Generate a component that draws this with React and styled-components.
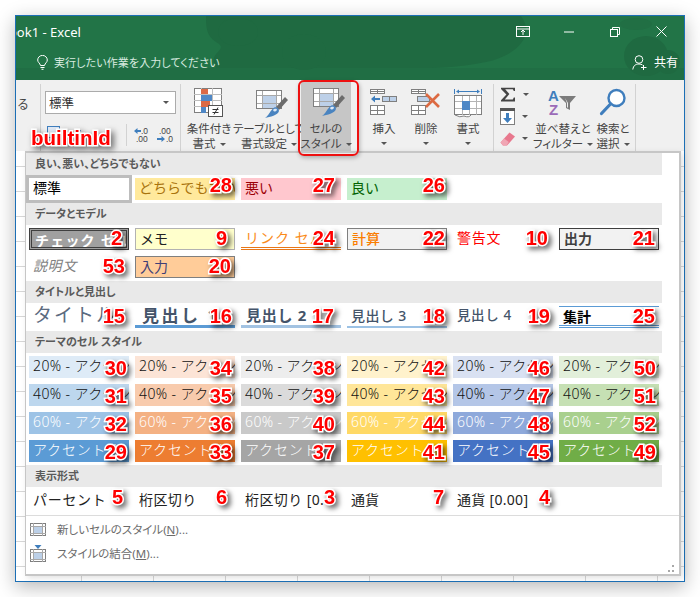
import React from "react";
import styled, { createGlobalStyle, css } from "styled-components";

const UI = `"Noto Sans", "Noto Sans CJK JP", sans-serif`;

const Global = createGlobalStyle`
  html, body { margin: 0; padding: 0; background: #fff; }
  body { font-family: ${UI}; width: 700px; height: 597px; overflow: hidden; }
  * { box-sizing: border-box; }
`;

const Page = styled.div`
  padding: 15px;
  width: 700px;
  height: 597px;
`;
const Window = styled.div`
  position: relative;
  width: 670px;
  height: 567px;
  border: 1px solid #1c6fb5;
  background: #fff;
  box-shadow: 0 5px 18px rgba(0, 0, 0, 0.28);
  display: flex;
  flex-direction: column;
`;
const TitleBar = styled.header`
  position: relative;
  height: 64px;
  flex: none;
  background: #227447;
  color: #fff;
  overflow: hidden;
`;
const TitleArt = styled.svg`
  position: absolute;
  inset: 0;
`;
const TitleRow = styled.div`
  position: relative;
  height: 31px;
  display: flex;
  align-items: center;
`;
const DocTitle = styled.div`
  margin-left: -7px;
  font-size: 13px;
  line-height: 31px;
  padding-top: 1px;
  white-space: nowrap;
`;
const WinButtons = styled.div`
  margin-left: auto;
  display: flex;
  align-items: center;
`;
const WinButton = styled.span`
  width: 46px;
  height: 31px;
  display: flex;
  align-items: center;
  justify-content: center;
`;
const SearchRow = styled.div`
  position: relative;
  height: 33px;
  display: flex;
  align-items: center;
  padding-left: 21px;
  padding-bottom: 3px;
`;
const SearchText = styled.span`
  margin-left: 6px;
  font-size: 11px;
  font-feature-settings: "palt";
  letter-spacing: 0.1px;
  color: #d9ebe0;
  white-space: nowrap;
`;
const Share = styled.div`
  margin-left: auto;
  margin-right: 6px;
  display: flex;
  align-items: center;
  gap: 7px;
  font-size: 12px;
`;

const Ribbon = styled.section`
  height: 71px;
  flex: none;
  background: #f0f0f0;
  display: flex;
  align-items: stretch;
  color: #444;
  overflow: hidden;
`;
const Divider = styled.i`
  display: block;
  width: 1px;
  flex: none;
  margin: 4px 0 0;
  background: #d2d2d2;
`;
const ToolDivider = styled(Divider)`
  height: 22px;
  margin: 0 7px 0 15px;
`;
const Group = styled.div`
  flex: none;
  width: ${(p) => p.$w}px;
  display: flex;
  ${(p) => p.$ml && css`margin-left: ${p.$ml}px;`}
`;
const Fragment = styled.div`
  width: 24px;
  flex: none;
  position: relative;
  overflow: hidden;
  font-size: 12px;
`;
const FragmentText = styled.span`
  display: block;
  margin-top: 15px;
  margin-left: 1px;
  color: #444;
`;
const NumberGroup = styled.div`
  flex: none;
  width: 139px;
  padding: 11px 0 0 4px;
`;
const Combo = styled.div`
  width: 131px;
  height: 23px;
  background: #fff;
  border: 1px solid #ababab;
  display: flex;
  align-items: center;
  padding: 0 6px 0 3px;
  font-size: 12.5px;
  justify-content: space-between;
  color: #333;
`;
const NumberTools = styled.div`
  margin-top: 10px;
  display: flex;
  align-items: center;
`;
const Caret = styled.span`
  display: inline-block;
  width: 0;
  height: 0;
  border-left: 3px solid transparent;
  border-right: 3px solid transparent;
  border-top: 3px solid #555;
  flex: none;
  vertical-align: middle;
  ${(p) => p.$gap && css`margin-left: ${p.$gap}px;`}
`;
const RibbonButton = styled.div`
  flex: none;
  width: ${(p) => p.$w}px;
  height: 71px;
  display: flex;
  flex-direction: column;
  align-items: center;
  background: ${(p) => (p.$active ? "#c6c6c6" : "transparent")};
  white-space: nowrap;
`;
const IconSlot = styled.div`
  height: 41px;
  padding-top: ${(p) => p.$top ?? 7}px;
  display: flex;
  justify-content: center;
  align-items: flex-start;
`;
const ButtonLabel = styled.div`
  font-size: 11.5px;
  line-height: 15px;
  font-feature-settings: "palt";
  text-align: center;
  color: #444;
  white-space: nowrap;
`;
const CaretLine = styled.div`
  height: 15px;
  display: flex;
  align-items: center;
  justify-content: center;
`;
const EditColumn = styled.div`
  flex: none;
  width: 36px;
  margin-left: 6px;
  padding-top: 6px;
  display: flex;
  flex-direction: column;
  gap: 5px;
`;
const EditRow = styled.div`
  display: flex;
  align-items: center;
  height: 17px;
  gap: 7px;
`;

const Sheet = styled.div`
  flex: 1;
  background-color: #fff;
  background-image:
    repeating-linear-gradient(to right, transparent 0 65px, #d6d6d6 65px 66px, transparent 66px 72px),
    repeating-linear-gradient(to bottom, transparent 0 15px, #d6d6d6 15px 16px, transparent 16px 25px);
`;

const Panel = styled.div`
  position: absolute;
  left: 9px;
  top: 135px;
  width: 656px;
  height: 425px;
  background: #fff;
  border: 1px solid #c6c6c6;
  border-top-width: 2px;
  border-right-width: 2px;
  border-bottom-width: 2px;
  box-shadow: 2px 2px 6px rgba(0, 0, 0, 0.12);
  display: flex;
  flex-direction: column;
`;
const Gallery = styled.div`
  width: 636px;
`;
const SectionHead = styled.div`
  height: 22px;
  background: #e9e9e9;
  padding-left: 9px;
  font-size: 11px;
  font-weight: 700;
  line-height: 21px;
  color: #5a5a5a;
  font-feature-settings: "palt";
  white-space: nowrap;
`;
const StyleGrid = styled.div`
  display: grid;
  grid-template-columns: repeat(6, 100px);
  grid-auto-rows: 22px;
  gap: 6px;
  padding: 3px;
`;
const Slot = styled.div`
  position: relative;
  ${(p) => p.$selected && css`outline: 3px solid #bdbdbd;`}
`;

const variants = {
  normal: css`color: #000; background: #fff;`,
  neutral: css`color: #a9730c; background: #ffe99c;`,
  bad: css`color: #9c0006; background: #ffc7ce;`,
  good: css`color: #006100; background: #c6efce;`,
  check: css`
    color: #fff;
    font-weight: 700;
    background: #a0a0a0;
    border: 3px double #3f3f3f;
    padding-left: 3px;
  `,
  note: css`color: #222; background: #ffffcc; border: 1px solid #b2b2b2;`,
  link: css`color: #fa8b1a; background: #fff; border-bottom: 3px double #e87717;`,
  calc: css`color: #fa7d00; font-weight: 500; background: #f2f2f2; border: 1px solid #7f7f7f;`,
  warn: css`color: #ff0000; background: #fff;`,
  output: css`color: #3f3f3f; font-weight: 700; background: #f2f2f2; border: 1px solid #3f3f3f;`,
  explain: css`color: #7f7f7f; font-style: italic; background: #fff;`,
  input: css`color: #3f3f76; background: #ffcc99; border: 1px solid #7f7f7f;`,
  title: css`color: #5c6b80; font-size: 19px; background: #fff;`,
  h1: css`color: #44546a; font-size: 17px; font-weight: 700; background: #fff; border-bottom: 3px solid #5b9bd5; padding-left: 7px;`,
  h2: css`color: #44546a; font-size: 15px; font-weight: 700; background: #fff; border-bottom: 3px solid #a3c3e2; padding-left: 5px;`,
  h3: css`color: #44546a; font-size: 14px; font-weight: 500; background: #fff; border-bottom: 2px solid #9cc2e5;`,
  h4: css`color: #44546a; font-size: 13.5px; font-weight: 500; background: #fff;`,
  total: css`
    color: #000;
    font-weight: 700;
    background: #fff;
    border-top: 1px solid #5b9bd5;
    border-bottom: 3px double #5b9bd5;
  `,
  plain: css`color: #222; background: #fff;`,
};

const Swatch = styled.div`
  width: 100%;
  height: 100%;
  overflow: hidden;
  white-space: nowrap;
  font-size: 14px;
  line-height: 17px;
  padding: 1px 0 0 4px;
  display: flex;
  align-items: flex-start;
  ${(p) => variants[p.$v]}
  ${(p) => p.$bg && css`background: ${p.$bg}; color: ${p.$fg}; font-weight: 300;`}
  ${(p) => p.$wide && css`letter-spacing: ${p.$wide}px;`}
`;
const Badge = styled.span`
  position: absolute;
  right: ${(p) => p.$r + 1}px;
  top: 50%;
  transform: translateY(calc(-50% + ${(p) => p.$dy}px));
  font-family: "Liberation Sans", Arial, sans-serif;
  font-size: 20px;
  line-height: 20px;
  font-weight: 700;
  color: #f00;
  -webkit-text-stroke: 3px #fff;
  paint-order: stroke fill;
  filter: drop-shadow(3px 3px 2.5px rgba(0, 0, 0, 0.55));
  z-index: 2;
`;

const PanelRule = styled.div`
  height: 1px;
  background: #dcdcdc;
  margin-top: 0;
`;
const MenuList = styled.div`
  padding-top: 1px;
`;
const MenuItem = styled.div`
  height: 24px;
  display: flex;
  align-items: center;
  padding-left: 4px;
  font-size: 11.5px;
  color: #6b6b6b;
  font-feature-settings: "palt";
  white-space: nowrap;
`;
const MenuIconSlot = styled.span`
  width: 27px;
  display: flex;
  flex: none;
`;
const Grip = styled.svg`
  position: absolute;
  right: 4px;
  bottom: 1px;
`;
const RedFrame = styled.div`
  position: absolute;
  left: 282px;
  top: 64px;
  width: 61px;
  height: 76px;
  border: 2.5px solid #ee1111;
  border-radius: 6px;
  box-shadow: 1px 2px 4px rgba(0, 0, 0, 0.25);
  z-index: 3;
`;
const BuiltinLabel = styled.span`
  position: absolute;
  left: 15px;
  top: 110px;
  font-family: "Liberation Sans", Arial, sans-serif;
  font-size: 20.5px;
  line-height: 24px;
  font-weight: 700;
  color: #f00;
  -webkit-text-stroke: 3px #fff;
  paint-order: stroke fill;
  filter: drop-shadow(3px 3px 3px rgba(0, 0, 0, 0.55));
  z-index: 3;
`;
const BrushSvg = styled.svg`
  margin-left: 8px;
`;

/* ---------- drawings ---------- */
const GRAY = "#7f7f7f";

const CondIcon = () => (
  <svg width="32" height="32" viewBox="0 0 32 32" shapeRendering="crispEdges">
    <rect x="1.5" y="1.5" width="27" height="24" fill="#fff" stroke={GRAY} />
    <path d="M8.5 1v25M19.5 1v25M1 7.5h28M1 13.5h28M1 19.5h28" stroke="#bdbdbd" fill="none" />
    <rect x="8" y="2" width="7" height="5" fill="#db6a46" />
    <rect x="8" y="8" width="11" height="6" fill="#4f88c6" />
    <rect x="8" y="14" width="9" height="6" fill="#db6a46" />
    <rect x="8" y="20" width="5" height="6" fill="#4f88c6" />
    <rect x="15.5" y="18.5" width="14" height="11" fill="#fff" stroke="#555" />
    <path d="M19.5 22.5h6M19.5 25.5h6M25 20.5l-4 7" stroke="#333" fill="none" shapeRendering="auto" />
  </svg>
);
const BrushIcon = () => (
  <BrushSvg width="36" height="32" viewBox="0 0 36 32">
    <rect x="1.5" y="1.5" width="25" height="18" fill="#fff" stroke={GRAY} shapeRendering="crispEdges" />
    <rect x="7" y="6" width="15" height="13" fill="#bdd0e8" shapeRendering="crispEdges" />
    <path d="M7.5 2v17M21.5 2v17M2 6.5h24M2 14.5h24" stroke="#a8a8a8" fill="none" shapeRendering="crispEdges" />
    <path d="M30 8 L33 11 L24 21 L21 18 Z" fill="#6c6c6c" />
    <path d="M17.5 20 C20 16.5 24 18.5 24 22 C23 26 15 28 10 29 C14 26 14.5 23 17.5 20Z" fill="#4a84c0" />
    <path d="M18 21 C20 19 22 20 22 21 C20 23 19 23 18 21Z" fill="#dde9f6" />
  </BrushSvg>
);
const CellGrid = ({ x, y, w = 15, h = 9 }) => (
  <g shapeRendering="crispEdges" fill="none" stroke={GRAY}>
    <rect x={x + 0.5} y={y + 0.5} width={w} height={h} fill="#fff" />
    <path d={`M${x + Math.round(w / 2) + 0.5} ${y}v${h}M${x} ${y + Math.round(h / 2) + 0.5}h${w}`} />
  </g>
);
const InsertIcon = () => (
  <svg width="30" height="28" viewBox="0 0 30 28">
    <CellGrid x={1} y={1} w={14} h={4} />
    <rect x="13.5" y="8.5" width="14" height="5" fill="#bcd0e8" stroke={GRAY} shapeRendering="crispEdges" />
    <path d="M20.5 9v5" stroke={GRAY} shapeRendering="crispEdges" />
    <path d="M2 11 L6 7.5 V10 H11 V12 H6 V14.5Z" fill="#3f7ebd" />
    <CellGrid x={1} y={17} w={14} h={9} />
  </svg>
);
const DeleteIcon = () => (
  <svg width="32" height="28" viewBox="0 0 32 28">
    <CellGrid x={1} y={1} w={14} h={4} />
    <rect x="7" y="8.5" width="12" height="5" fill="#bcd0e8" stroke={GRAY} shapeRendering="crispEdges" />
    <CellGrid x={1} y={17} w={14} h={9} />
    <path d="M16 6 L29 19 M29 6 L16 19" stroke="#dc6a42" strokeWidth="2.6" fill="none" />
  </svg>
);
const FormatIcon = () => (
  <svg width="30" height="30" viewBox="0 0 30 30">
    <path d="M1.5 1v5M28.5 1v5M4 3.5h22" stroke="#3f7ebd" fill="none" shapeRendering="crispEdges" />
    <path d="M3 3.5l3-2v4zM27 3.5l-3-2v4z" fill="#3f7ebd" />
    <rect x="1.5" y="7.5" width="27" height="19" fill="#fff" stroke={GRAY} shapeRendering="crispEdges" />
    <path d="M9 8v19M16 8v19M23 8v19M2 13h26M2 20h26" stroke="#b4b4b4" fill="none" shapeRendering="crispEdges" />
    <rect x="9" y="13" width="8" height="9" fill="#4f88c6" />
    <path d="M2 27 q5 3 9 1 q5 2 7-1" stroke={GRAY} fill="#fff" />
  </svg>
);
const SigmaIcon = () => (
  <svg width="16" height="15" viewBox="0 0 16 15">
    <path d="M1 0.8h14v3.2h-1.2l-1-1.8H5.2L9.4 7 4.8 12.4h8l1-1.9H15v4H1v-1.2L6.4 7.6 1 1.9z" fill="#444" />
  </svg>
);
const FillIcon = () => (
  <svg width="15" height="17" viewBox="0 0 15 17">
    <rect x="0.5" y="0.5" width="14" height="16" fill="#fff" stroke={GRAY} shapeRendering="crispEdges" />
    <rect x="0" y="0" width="15" height="3" fill="#555" />
    <path d="M6 5h3v5h3l-4.5 5L3 10h3z" fill="#3f7ebd" />
  </svg>
);
const EraserIcon = () => (
  <svg width="15" height="14" viewBox="0 0 15 14">
    <path d="M9.5 0.5 L15 4.5 L7 13.5 H3 L0.5 10.5Z" fill="#e8788e" />
    <path d="M0.5 10.5 L4 6.5 L8.8 10 L6.5 13.5 H3Z" fill="#f0a6b4" />
  </svg>
);
const SortIcon = () => (
  <svg width="30" height="28" viewBox="0 0 30 28">
    <text x="0" y="12" fontFamily="Liberation Sans" fontWeight="700" fontSize="15" fill="#3f7ebd">A</text>
    <text x="1" y="26" fontFamily="Liberation Sans" fontWeight="700" fontSize="15" fill="#9b6bb8">Z</text>
    <path d="M11 7 H28 L22 14 V21 L18 19 V14Z" fill="#7c7c7c" />
    <path d="M17 9 L20 14 V19 L19 18 V14Z" fill="#eee" />
  </svg>
);
const FindIcon = () => (
  <svg width="28" height="28" viewBox="0 0 28 28">
    <circle cx="17.5" cy="10" r="8" fill="#fff" stroke="#3f7ebd" strokeWidth="2.4" />
    <path d="M11.5 16 L2.5 25.5" stroke="#3f7ebd" strokeWidth="3.2" strokeLinecap="round" />
  </svg>
);
const NewStyleIcon = () => (
  <svg width="16" height="13" viewBox="0 0 16 13" shapeRendering="crispEdges">
    <rect x="0.5" y="0.5" width="15" height="12" fill="#fff" stroke={GRAY} />
    <rect x="4" y="3" width="8" height="7" fill="#bcd0e8" />
    <path d="M3.5 0v13M12.5 0v13M0 3h16M0 10h16" stroke="#a8a8a8" fill="none" />
  </svg>
);
const MergeIcon = () => (
  <svg width="16" height="17" viewBox="0 0 16 17">
    <path d="M4.5 0h7L8 4z" fill="#3f7ebd" />
    <g shapeRendering="crispEdges">
      <rect x="0.5" y="4.5" width="15" height="12" fill="#fff" stroke={GRAY} />
      <rect x="4" y="7" width="8" height="7" fill="#bcd0e8" />
      <path d="M3.5 4v13M12.5 4v13M0 7h16M0 14h16" stroke="#a8a8a8" fill="none" />
    </g>
  </svg>
);
const Title = () => (
  <TitleArt width="668" height="64" viewBox="0 0 668 64">
    <g fill="#1f6a41">
      <path d="M190 0 H505 C520 20 500 40 470 46 C440 52 420 52 400 52 H200 C190 36 215 34 200 26 C190 20 190 10 190 0Z" />
      <ellipse cx="222" cy="16" rx="20" ry="14" />
      <ellipse cx="620" cy="8" rx="16" ry="6" opacity="0.5" />
      <ellipse cx="288" cy="36" rx="22" ry="18" />
      <ellipse cx="630" cy="40" rx="22" ry="20" />
      <ellipse cx="652" cy="46" rx="12" ry="12" />
      <rect x="0" y="52" width="668" height="12" opacity="0.55" />
    </g>
  </TitleArt>
);
const Stroke = { fill: "none", stroke: "#fff", strokeWidth: 1 };
const ChromeDisplay = () => (
  <svg width="14" height="11" viewBox="0 0 14 11" {...Stroke}>
    <rect x="0.5" y="0.5" width="13" height="10" />
    <path d="M0 3h14M7 9V4M5 6l2-2 2 2" />
  </svg>
);
const ChromeMin = () => (
  <svg width="10" height="2" viewBox="0 0 10 2" {...Stroke}><path d="M0 1h10" /></svg>
);
const ChromeRestore = () => (
  <svg width="10" height="10" viewBox="0 0 10 10" {...Stroke}>
    <path d="M2.5 2.5V.5h7v7h-2" />
    <rect x="0.5" y="2.5" width="7" height="7" />
  </svg>
);
const ChromeClose = () => (
  <svg width="11" height="11" viewBox="0 0 11 11" {...Stroke}><path d="M.5.5l10 10M10.5.5l-10 10" /></svg>
);
const Bulb = () => (
  <svg width="11" height="15" viewBox="0 0 11 15" fill="none" stroke="#fff">
    <path d="M3.5 10.5 C3 8 .7 7.5 .7 5 A4.8 4.6 0 0 1 10.3 5 C10.3 7.5 8 8 7.5 10.5Z" />
    <path d="M3.5 12.5h4M4.5 14.3h2" />
  </svg>
);
const ShareGlyph = () => (
  <svg width="15" height="15" viewBox="0 0 15 15" fill="none" stroke="#fff">
    <circle cx="7" cy="4.5" r="3.8" />
    <path d="M.8 14.5 C1.5 10.5 3.5 9 7 9 C8.5 9 9.5 9.3 10.5 10M11.5 10v5M9 12.5h5.5" />
  </svg>
);
const DecimalTools = () => (
  <svg width="40" height="18" viewBox="0 0 40 18">
    <g fontFamily="Liberation Sans" fontSize="8.5" fill="#444">
      <text x="7" y="8">.0</text>
      <text x="2" y="16">.00</text>
      <text x="25" y="8">.00</text>
      <text x="32" y="16">.0</text>
    </g>
    <path d="M0 5 L3.5 2 V4 H7 V6 H3.5 V8Z" fill="#3f7ebd" />
    <path d="M31 13 L27.5 10 V12 H23 V14 H27.5 V16Z" fill="#3f7ebd" />
  </svg>
);
const CurrencyStub = () => (
  <svg width="66" height="18" viewBox="0 0 66 18">
    <rect x="2.5" y="0.5" width="12" height="11" fill="#dfe8f4" stroke="#3f7ebd" />
    <text x="28" y="12" fontFamily="Liberation Sans" fontSize="11" fill="#444">%</text>
    <text x="56" y="12" fontFamily="Liberation Sans" fontSize="11" fontWeight="700" fill="#444">,</text>
  </svg>
);

/* ---------- data ---------- */
const accent = [
  ["#deebf7", "#bdd7ee", "#9dc3e6", "#5b9bd5"],
  ["#fce4d6", "#f8cbad", "#f4b183", "#ed7d31"],
  ["#ededed", "#dbdbdb", "#c9c9c9", "#a5a5a5"],
  ["#fff2cc", "#ffe699", "#ffd966", "#ffc000"],
  ["#d9e1f2", "#b4c6e7", "#8ea9db", "#4472c4"],
  ["#e2efda", "#c6e0b4", "#a9d08e", "#70ad47"],
];
const themeRights = [1, 2, 5, 1, 2, 2];
const themeRows = [
  { label: "20% - アクセント", nums: [30, 34, 38, 42, 46, 50], fg: "#111", i: 0, wide: 0.4 },
  { label: "40% - アクセント", nums: [31, 35, 39, 43, 47, 51], fg: "#111", i: 1, wide: 0.4 },
  { label: "60% - アクセント", nums: [32, 36, 40, 44, 48, 52], fg: "#fff", i: 2, wide: 0.4 },
  { label: "アクセント 1", nums: [29, 33, 37, 41, 45, 49], fg: "#fff", i: 3, wide: 0.8 },
];
const themeCells = themeRows.flatMap((row) =>
  row.nums.map((n, c) => ({
    text: row.label,
    n,
    r: themeRights[c],
    bg: accent[c][row.i],
    fg: row.fg,
    wide: row.wide,
  }))
);

const sections = [
  {
    head: "良い、悪い、どちらでもない",
    dy: -4,
    cells: [
      { text: "標準", v: "normal", selected: true },
      { text: "どちらでもない", v: "neutral", n: 28, r: 2 },
      { text: "悪い", v: "bad", n: 27, r: 5 },
      { text: "良い", v: "good", n: 26, r: 1 },
    ],
  },
  {
    head: "データとモデル",
    dy: -1,
    cells: [
      { text: "チェック セル", v: "check", n: 2, r: 6, wide: 1.2 },
      { text: "メモ", v: "note", n: 9, r: 7 },
      { text: "リンク セル", v: "link", n: 24, r: 5, wide: 1 },
      { text: "計算", v: "calc", n: 22, r: 1 },
      { text: "警告文", v: "warn", n: 10, r: 4, wide: 0.7 },
      { text: "出力", v: "output", n: 21, r: 3 },
      { text: "説明文", v: "explain", n: 53, r: 3, wide: 0.6 },
      { text: "入力", v: "input", n: 20, r: 3 },
    ],
  },
  {
    head: "タイトルと見出し",
    dy: -1,
    cells: [
      { text: "タイトル", v: "title", n: 15, r: 3, wide: 2 },
      { text: "見出し 1", v: "h1", n: 16, r: 2, wide: 2.5 },
      { text: "見出し 2", v: "h2", n: 17, r: 6, wide: 0.7 },
      { text: "見出し 3", v: "h3", n: 18, r: 1, wide: 0.4 },
      { text: "見出し 4", v: "h4", n: 19, r: 2, wide: 0.6 },
      { text: "集計", v: "total", n: 25, r: 3 },
    ],
  },
  { head: "テーマのセル スタイル", dy: 1, cells: themeCells },
  {
    head: "表示形式",
    dy: -4,
    cells: [
      { text: "パーセント", v: "plain", n: 5, r: 5, wide: 0.7 },
      { text: "桁区切り", v: "plain", n: 6, r: 7, wide: 0.4 },
      { text: "桁区切り [0.", v: "plain", n: 3, r: 5, wide: 0.4 },
      { text: "通貨", v: "plain", n: 7, r: 2 },
      { text: "通貨 [0.00]", v: "plain", n: 4, r: 2, wide: 0.3 },
    ],
  },
];

const Big = ({ w, icon, top, lines, active, stackCaret }) => (
  <RibbonButton $w={w} $active={active}>
    <IconSlot $top={top}>{icon}</IconSlot>
    {lines.map((line, i) => (
      <ButtonLabel key={line}>
        {line}
        {!stackCaret && i === lines.length - 1 && <Caret $gap={4} />}
      </ButtonLabel>
    ))}
    {stackCaret && (
      <CaretLine>
        <Caret />
      </CaretLine>
    )}
  </RibbonButton>
);

export default function App() {
  return (
    <Page>
      <Global />
      <Window>
        <TitleBar>
          <Title />
          <TitleRow>
            <DocTitle>ook1 - Excel</DocTitle>
            <WinButtons>
              <WinButton><ChromeDisplay /></WinButton>
              <WinButton><ChromeMin /></WinButton>
              <WinButton><ChromeRestore /></WinButton>
              <WinButton><ChromeClose /></WinButton>
            </WinButtons>
          </TitleRow>
          <SearchRow>
            <Bulb />
            <SearchText>実行したい作業を入力してください</SearchText>
            <Share><ShareGlyph />共有</Share>
          </SearchRow>
        </TitleBar>

        <Ribbon>
          <Fragment><FragmentText>る</FragmentText></Fragment>
          <Divider />
          <NumberGroup>
            <Combo>標準<Caret /></Combo>
            <NumberTools>
              <CurrencyStub />
              <ToolDivider />
              <DecimalTools />
            </NumberTools>
          </NumberGroup>
          <Divider />
          <Group $w={173}>
            <Big w={56} icon={<CondIcon />} lines={["条件付き", "書式"]} />
            <Big w={64} top={9} icon={<BrushIcon />} lines={["テーブルとして", "書式設定"]} />
            <Big w={50} active top={7} icon={<BrushIcon />} lines={["セルの", "スタイル"]} />
          </Group>
          <Group $w={126} $ml={9}>
            <Big w={42} top={8} icon={<InsertIcon />} lines={["挿入"]} stackCaret />
            <Big w={42} top={8} icon={<DeleteIcon />} lines={["削除"]} stackCaret />
            <Big w={42} top={8} icon={<FormatIcon />} lines={["書式"]} stackCaret />
          </Group>
          <Group $w={4} />
          <Divider />
          <EditColumn>
            <EditRow><SigmaIcon /><Caret /></EditRow>
            <EditRow><FillIcon /><Caret /></EditRow>
            <EditRow><EraserIcon /><Caret /></EditRow>
          </EditColumn>
          <Group $w={56} $ml={-1}>
            <Big w={56} top={9} icon={<SortIcon />} lines={["並べ替えと", "フィルター"]} />
          </Group>
          <Group $w={44}>
            <Big w={44} top={8} icon={<FindIcon />} lines={["検索と", "選択"]} />
          </Group>
          <Divider />
        </Ribbon>

        <Sheet />

        <Panel>
          <Gallery>
            {sections.map((s) => (
              <React.Fragment key={s.head}>
                <SectionHead>{s.head}</SectionHead>
                <StyleGrid>
                  {s.cells.map((c) => (
                    <Slot key={c.text + (c.n ?? "")} $selected={c.selected}>
                      <Swatch $v={c.v} $bg={c.bg} $fg={c.fg} $wide={c.wide}>{c.text}</Swatch>
                      {c.n != null && <Badge $r={c.r} $dy={s.dy}>{c.n}</Badge>}
                    </Slot>
                  ))}
                </StyleGrid>
              </React.Fragment>
            ))}
          </Gallery>
          <PanelRule />
          <MenuList>
            <MenuItem>
              <MenuIconSlot><NewStyleIcon /></MenuIconSlot>
              新しいセルのスタイル(<u>N</u>)...
            </MenuItem>
            <MenuItem>
              <MenuIconSlot><MergeIcon /></MenuIconSlot>
              スタイルの結合(<u>M</u>)...
            </MenuItem>
          </MenuList>
          <Grip width="8" height="8" viewBox="0 0 8 8" fill="#a8a8a8">
            <rect x="5" y="0" width="2" height="2" />
            <rect x="1" y="5" width="2" height="2" />
            <rect x="5" y="5" width="2" height="2" />
          </Grip>
        </Panel>
        <RedFrame />
        <BuiltinLabel>builtinId</BuiltinLabel>
      </Window>
    </Page>
  );
}
